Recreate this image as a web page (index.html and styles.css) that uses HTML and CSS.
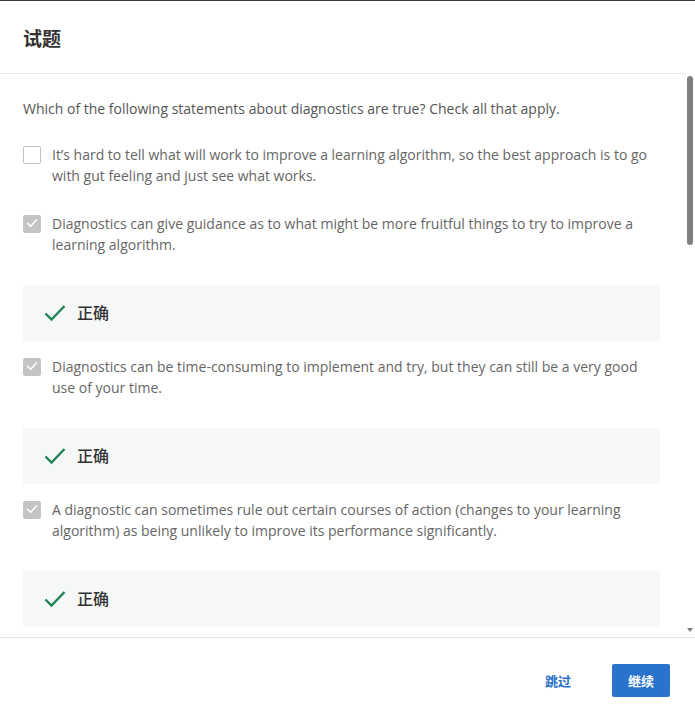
FILE: index.html
```html
<!DOCTYPE html>
<html lang="zh">
<head>
<meta charset="utf-8">
<title>试题</title>
<link rel="stylesheet" href="styles.css">
</head>
<body>
<div class="dialog">
  <header class="head">
    <h1 class="title">试题</h1>
  </header>
  <div class="viewport">
    <main class="body">
      <p class="question">Which of the following statements about diagnostics are true? Check all that apply.</p>

      <div class="option">
        <span class="box"></span>
        <span class="label">It’s hard to tell what will work to improve a learning algorithm, so the best approach is to go with gut feeling and just see what works.</span>
      </div>

      <div class="option">
        <span class="box checked"><svg viewBox="0 0 18 18" width="18" height="18"><path d="M4.5 9.2 L7.7 12.3 L13.6 5.8" fill="none" stroke="#fff" stroke-width="1.6" stroke-linecap="round" stroke-linejoin="round"/></svg></span>
        <span class="label">Diagnostics can give guidance as to what might be more fruitful things to try to improve a learning algorithm.</span>
      </div>
      <div class="feedback">
        <svg class="tick" viewBox="0 0 22 18" width="22" height="18"><path d="M1.5 9.5 L7.5 15.5 L20.5 2" fill="none" stroke="#1f8354" stroke-width="2.4"/></svg>
        <span class="verdict">正确</span>
      </div>

      <div class="option">
        <span class="box checked"><svg viewBox="0 0 18 18" width="18" height="18"><path d="M4.5 9.2 L7.7 12.3 L13.6 5.8" fill="none" stroke="#fff" stroke-width="1.6" stroke-linecap="round" stroke-linejoin="round"/></svg></span>
        <span class="label">Diagnostics can be time-consuming to implement and try, but they can still be a very good use of your time.</span>
      </div>
      <div class="feedback">
        <svg class="tick" viewBox="0 0 22 18" width="22" height="18"><path d="M1.5 9.5 L7.5 15.5 L20.5 2" fill="none" stroke="#1f8354" stroke-width="2.4"/></svg>
        <span class="verdict">正确</span>
      </div>

      <div class="option">
        <span class="box checked"><svg viewBox="0 0 18 18" width="18" height="18"><path d="M4.5 9.2 L7.7 12.3 L13.6 5.8" fill="none" stroke="#fff" stroke-width="1.6" stroke-linecap="round" stroke-linejoin="round"/></svg></span>
        <span class="label">A diagnostic can sometimes rule out certain courses of action (changes to your learning algorithm) as being unlikely to improve its performance significantly.</span>
      </div>
      <div class="feedback">
        <svg class="tick" viewBox="0 0 22 18" width="22" height="18"><path d="M1.5 9.5 L7.5 15.5 L20.5 2" fill="none" stroke="#1f8354" stroke-width="2.4"/></svg>
        <span class="verdict">正确</span>
      </div>

      <div class="more"></div>
    </main>
    <div class="scrollbar" aria-hidden="true">
      <span class="thumb"></span>
      <span class="arrow"></span>
    </div>
  </div>
  <footer class="foot">
    <button class="btn link">跳过</button>
    <button class="btn primary">继续</button>
  </footer>
</div>
</body>
</html>
```

FILE: styles.css
```css
* { box-sizing: border-box; }
html, body { margin: 0; height: 100%; }
body {
  font-family: "Open Sans", "Noto Sans CJK SC", sans-serif;
  background: #fff;
  color: #666;
}
.dialog {
  height: 100vh;
  display: flex;
  flex-direction: column;
  border-top: 1px solid #3a3a3a;
}
.head {
  height: 73px;
  flex: none;
  display: flex;
  align-items: center;
  padding: 0 23px;
  border-bottom: 1px solid #e6e6e6;
  margin-right: 9px;
}
.title {
  margin: 0;
  font-size: 19px;
  font-weight: 700;
  color: #333;
  font-family: "Noto Sans CJK SC", sans-serif;
  line-height: 1;
  padding-top: 1px;
}
.viewport {
  flex: 1;
  min-height: 0;
  position: relative;
}
.body {
  height: 100%;
  overflow: hidden;
  padding: 24px 35px 0 23px;
}
.scrollbar {
  position: absolute;
  top: 0;
  right: 0;
  bottom: 0;
  width: 9px;
}
.thumb {
  position: absolute;
  top: 2px;
  left: 1px;
  width: 6px;
  height: 169px;
  border-radius: 3px;
  background: #7e7e7e;
}
.arrow {
  position: absolute;
  bottom: 5px;
  left: 1px;
  width: 0;
  height: 0;
  border-left: 3.5px solid transparent;
  border-right: 3.5px solid transparent;
  border-top: 4px solid #7e7e7e;
}
.question {
  margin: 0;
  font-size: 14px;
  line-height: 21px;
  color: #555;
}
.option {
  display: flex;
  align-items: flex-start;
  gap: 11px;
  font-size: 14px;
  line-height: 21px;
  color: #666;
  margin-top: 15px;
}
.question + .option { margin-top: 25px; }
.option + .option { margin-top: 27px; }
.box {
  flex: none;
  width: 18px;
  height: 18px;
  margin-top: 1.5px;
  border: 1.5px solid #c2c2c2;
  border-radius: 2px;
  background: #fff;
  display: flex;
}
.box svg { margin: -1.5px; }
.box.checked {
  background: #c4c4c4;
  border-color: #c4c4c4;
}
.label { flex: 1; }
.feedback {
  margin-top: 30px;
  height: 56px;
  background: #f5f8f7;
  display: flex;
  align-items: center;
  gap: 11px;
  padding-left: 21px;
  padding-bottom: 3px;
}
.tick { flex: none; margin-top: 2px; }
.verdict {
  font-family: "Noto Sans CJK SC", sans-serif;
  font-size: 16px;
  font-weight: 500;
  color: #333;
}
.more { height: 1300px; }
.foot {
  flex: none;
  border-top: 1px solid #e8e2e4;
  display: flex;
  justify-content: flex-end;
  align-items: center;
  gap: 25px;
  padding: 26px 25px 25px;
}
.btn {
  font-family: "Noto Sans CJK SC", sans-serif;
  font-size: 13px;
  font-weight: 700;
  border: none;
  border-radius: 2px;
  height: 33px;
  cursor: pointer;
}
.btn.link {
  background: none;
  color: #2a73cc;
  padding: 0 16px;
}
.btn.primary {
  background: #2a73cc;
  color: #fff;
  width: 58px;
  padding: 0;
}
```
